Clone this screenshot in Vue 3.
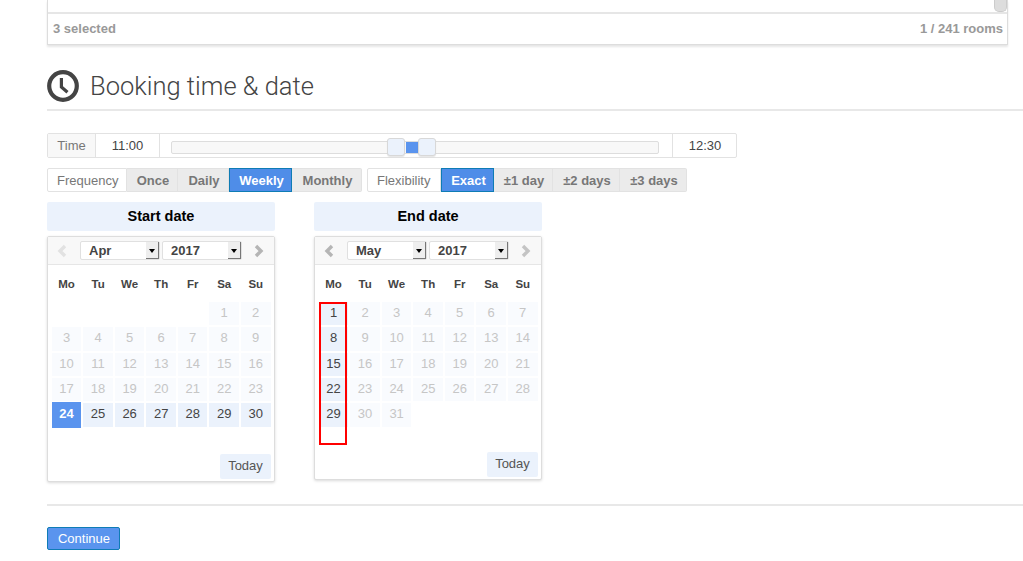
<template>
	<div class="page">
		<section class="rooms">
			<div class="rooms-list">
				<div class="thumb"></div>
			</div>
			<div class="rooms-foot">
				<span>3 selected</span>
				<span>1 / 241 rooms</span>
			</div>
		</section>

		<h2 class="heading">
			<svg class="clock" viewBox="0 0 32 32" width="32" height="32">
				<circle cx="16" cy="16" r="13.8" fill="none" stroke="#444" stroke-width="4.2" />
				<path d="M14.4 8 L14.4 17 L20.5 22.2" fill="none" stroke="#444" stroke-width="3.2" />
			</svg>
			<span>Booking time &amp; date</span>
		</h2>

		<div class="time-row">
			<div class="time-label">Time</div>
			<div class="time-val">11:00</div>
			<div class="slider">
				<div class="track">
					<div class="range"></div>
					<div class="handle h1"></div>
					<div class="handle h2"></div>
				</div>
			</div>
			<div class="time-val end">12:30</div>
		</div>

		<div class="options">
			<div class="btn-group" v-for="group in optionGroups" :key="group.label">
				<div class="group-label">{{ group.label }}</div>
				<div
					v-for="item in group.items"
					:key="item"
					class="opt"
					:class="{ active: item === group.active }"
				>
					{{ item }}
				</div>
			</div>
		</div>

		<div class="dates">
			<div class="date-col" v-for="cal in calendars" :key="cal.title" :class="cal.cls">
				<div class="date-title">{{ cal.title }}</div>
				<div class="calendar">
					<div class="cal-head">
						<svg class="chev" viewBox="0 0 12 14" width="12" height="14">
							<path d="M9 2 L4 7 L9 12" fill="none" :stroke="cal.prevColor" stroke-width="3.4" />
						</svg>
						<div class="fake-select">
							<span>{{ cal.month }}</span>
							<i class="arrow"></i>
						</div>
						<div class="fake-select">
							<span>2017</span>
							<i class="arrow"></i>
						</div>
						<svg class="chev" viewBox="0 0 12 14" width="12" height="14">
							<path d="M3 2 L8 7 L3 12" fill="none" :stroke="cal.nextColor" stroke-width="3.4" />
						</svg>
					</div>
					<div class="cal-body">
						<div class="dow" v-for="d in dows" :key="d">{{ d }}</div>
						<div
							v-for="(day, i) in cal.days"
							:key="i"
							class="day"
							:class="day.cls"
						>
							{{ day.n }}
						</div>
						<div class="red-box" v-if="cal.marked"></div>
					</div>
					<div class="cal-foot">
						<div class="today">Today</div>
					</div>
				</div>
			</div>
		</div>

		<hr class="sep" />

		<button class="continue">Continue</button>
	</div>
</template>

<script setup>
	const dows = ["Mo", "Tu", "We", "Th", "Fr", "Sa", "Su"]

	const optionGroups = [
		{ label: "Frequency", items: ["Once", "Daily", "Weekly", "Monthly"], active: "Weekly" },
		{ label: "Flexibility", items: ["Exact", "±1 day", "±2 days", "±3 days"], active: "Exact" },
	]

	// april starts on saturday, may on monday
	const startDays = []
	for (let i = 0; i < 5; i++) startDays.push({ n: "", cls: "blank" })
	for (let n = 1; n <= 30; n++) {
		let cls = "off"
		if (n === 24) cls = "selected"
		else if (n > 24) cls = "on"
		startDays.push({ n, cls })
	}

	const endDays = []
	for (let n = 1; n <= 31; n++) {
		endDays.push({ n, cls: (n - 1) % 7 === 0 ? "on" : "off" })
	}

	const calendars = [
		{
			title: "Start date",
			cls: "start",
			month: "Apr",
			prevColor: "#e2e2e2",
			nextColor: "#b5b5b5",
			days: startDays,
			marked: false,
		},
		{
			title: "End date",
			cls: "finish",
			month: "May",
			prevColor: "#b5b5b5",
			nextColor: "#c4c4c4",
			days: endDays,
			marked: true,
		},
	]
</script>

<style>
	html,
	body {
		margin: 0;
		background: #fff;
		overflow: hidden;
	}
</style>

<style scoped>
	.page {
		position: relative;
		height: 561px;
		overflow: hidden;
		padding-left: 47px;
		box-sizing: border-box;
		font-family: "Liberation Sans", Arial, sans-serif;
		font-size: 13px;
		color: #444;
	}

	.rooms {
		width: 961px;
		height: 45px;
		background: #fff;
		border: 1px solid #ddd;
		border-top: 0;
		box-shadow: 0 2px 2px rgba(0, 0, 0, 0.1);
		box-sizing: border-box;
	}
	.rooms-list {
		height: 14px;
		border-bottom: 2px solid #e6e6e6;
		box-sizing: border-box;
		display: flex;
		justify-content: flex-end;
	}
	.thumb {
		width: 13px;
		height: 12px;
		background: #ddd;
		border: 1px solid #ccc;
		border-top: 0;
		border-radius: 0 0 5px 5px;
		box-sizing: border-box;
	}
	.rooms-foot {
		display: flex;
		justify-content: space-between;
		padding: 7px 4px 0 5px;
		font-weight: bold;
		color: #999;
		line-height: 15px;
	}

	.heading {
		display: flex;
		align-items: flex-start;
		gap: 11px;
		margin: 25px 0 0;
		height: 39px;
		border-bottom: 2px solid #e8e8e8;
		font-family: Roboto, sans-serif;
		font-weight: 300;
		font-size: 25.5px;
		color: #444;
	}
	.heading span {
		line-height: 33px;
	}

	.time-row {
		display: flex;
		width: 690px;
		height: 25px;
		margin-top: 22px;
		border: 1px solid #e2e2e2;
		border-radius: 2px;
		box-sizing: border-box;
	}
	.time-label {
		width: 48px;
		background: #f8f8f8;
		border-right: 1px solid #e2e2e2;
		color: #777;
		text-align: center;
		line-height: 23px;
		box-sizing: border-box;
	}
	.time-val {
		width: 64px;
		border-right: 1px solid #e2e2e2;
		text-align: center;
		line-height: 23px;
		box-sizing: border-box;
	}
	.time-val.end {
		padding-left: 1px;
		border-right: 0;
		border-left: 1px solid #e2e2e2;
	}
	.slider {
		flex: 1;
		padding: 7px 13px 0 11px;
	}
	.track {
		position: relative;
		height: 13px;
		background: #f8f8f8;
		border: 1px solid #ddd;
		border-radius: 2px;
		box-sizing: border-box;
	}
	.range {
		position: absolute;
		left: 234px;
		top: 0;
		width: 12px;
		height: 11px;
		background: #5a94ee;
	}
	.handle {
		position: absolute;
		top: -4px;
		width: 18px;
		height: 18px;
		background: #ebf2fc;
		border: 1px solid #d8d8d8;
		border-radius: 3px;
		box-shadow: 0 1px 1px rgba(0, 0, 0, 0.1);
		box-sizing: border-box;
	}
	.h1 {
		left: 215px;
	}
	.h2 {
		left: 246px;
	}

	.options {
		display: flex;
		gap: 5px;
		margin-top: 10px;
	}
	.btn-group {
		display: flex;
		height: 24px;
		line-height: 23px;
	}
	.group-label {
		width: 80px;
		padding-left: 9px;
		color: #777;
		border: 1px solid #e2e2e2;
		border-radius: 2px 0 0 2px;
		box-sizing: border-box;
	}
	.btn-group:last-child .group-label {
		width: 74px;
	}
	.opt {
		width: 51px;
		padding-left: 2px;
		text-align: center;
		font-weight: bold;
		color: #777;
		background: #ebebeb;
		border: 1px solid #e2e2e2;
		border-left: 0;
		box-sizing: border-box;
	}
	.btn-group:first-child .opt:nth-child(4) {
		width: 63px;
	}
	.btn-group:first-child .opt:nth-child(5) {
		width: 70px;
	}
	.btn-group:last-child .opt:nth-child(2) {
		width: 53px;
	}
	.btn-group:last-child .opt:nth-child(3) {
		width: 59px;
	}
	.btn-group:last-child .opt:nth-child(4),
	.btn-group:last-child .opt:nth-child(5) {
		width: 67px;
	}
	.opt:last-child {
		border-radius: 0 2px 2px 0;
	}
	.opt.active {
		color: #fff;
		background: #4f8de8;
		border: 1px solid #0f7cb5;
	}

	.dates {
		display: flex;
		gap: 39px;
		margin-top: 10px;
	}
	.date-col {
		width: 228px;
	}
	.date-title {
		height: 29px;
		line-height: 28px;
		text-align: center;
		font-size: 14.5px;
		font-weight: bold;
		color: #000;
		background: #ebf2fc;
		border-radius: 2px;
	}
	.calendar {
		display: flex;
		flex-direction: column;
		margin-top: 5px;
		background: #fff;
		border: 1px solid #ddd;
		border-radius: 2px;
		box-shadow: 0 1px 3px rgba(0, 0, 0, 0.15);
		box-sizing: border-box;
	}
	.start .calendar {
		height: 246px;
	}
	.finish .calendar {
		height: 244px;
	}
	.cal-head {
		display: flex;
		align-items: center;
		height: 28px;
		padding: 0 8px;
		gap: 2px;
		background: #f8f8f8;
		border-bottom: 1px solid #e6e6e6;
		box-sizing: border-box;
	}
	.chev {
		flex: none;
		margin: 0 10px 0 0;
	}
	.chev:last-child {
		margin: 0 0 0 9px;
	}
	.fake-select {
		position: relative;
		flex: none;
		width: 80px;
		height: 19px;
		padding-left: 8px;
		line-height: 17px;
		font-weight: bold;
		color: #444;
		background: #fff;
		border: 1px solid #e0e0e0;
		border-radius: 2px;
		box-sizing: border-box;
	}
	.arrow {
		position: absolute;
		right: 0;
		top: 0;
		width: 13px;
		height: 17px;
		background: #eee;
		border-right: 1px solid #777;
		border-bottom: 1px solid #777;
		box-sizing: border-box;
	}
	.arrow::after {
		content: "";
		position: absolute;
		left: 3px;
		top: 7px;
		border-left: 3px solid transparent;
		border-right: 3px solid transparent;
		border-top: 4px solid #000;
	}

	.cal-body {
		position: relative;
		display: grid;
		grid-template-columns: repeat(7, 1fr);
		grid-template-rows: 35px;
		grid-auto-rows: 23.33px;
		gap: 2px;
		padding: 0 3.5px 0 3.8px;
	}
	.dow {
		font-size: 11.5px;
		font-weight: bold;
		color: #444;
		text-align: center;
		line-height: 38px;
	}
	.day {
		text-align: center;
		line-height: 22.6px;
	}
	.day.off {
		background: #f9fbfe;
		color: #c6c6c6;
	}
	.day.on {
		background: #ebf2fc;
		color: #444;
	}
	.day.selected {
		background: #5a94ee;
		color: #fff;
		font-weight: bold;
		margin: -1px 0;
		line-height: 24.6px;
	}
	.red-box {
		position: absolute;
		left: 4px;
		top: 37px;
		width: 28px;
		height: 143px;
		border: 2px solid #f00;
		box-sizing: border-box;
	}
	.cal-foot {
		display: flex;
		justify-content: flex-end;
		margin-top: auto;
		padding: 0 3px 2px 0;
	}
	.today {
		width: 51px;
		height: 25px;
		line-height: 24px;
		text-align: center;
		color: #555;
		background: #ebf2fc;
		border-radius: 2px;
	}

	.sep {
		margin: 22px 0 0;
		border: 0;
		border-top: 2px solid #e8e8e8;
	}

	.continue {
		display: block;
		width: 73px;
		height: 23px;
		margin-top: 21px;
		padding: 0 0 0 1px;
		font: 13px "Liberation Sans", Arial, sans-serif;
		color: #fff;
		background: #5a94ee;
		border: 1px solid #0f7cb5;
		border-radius: 2px;
	}
</style>
